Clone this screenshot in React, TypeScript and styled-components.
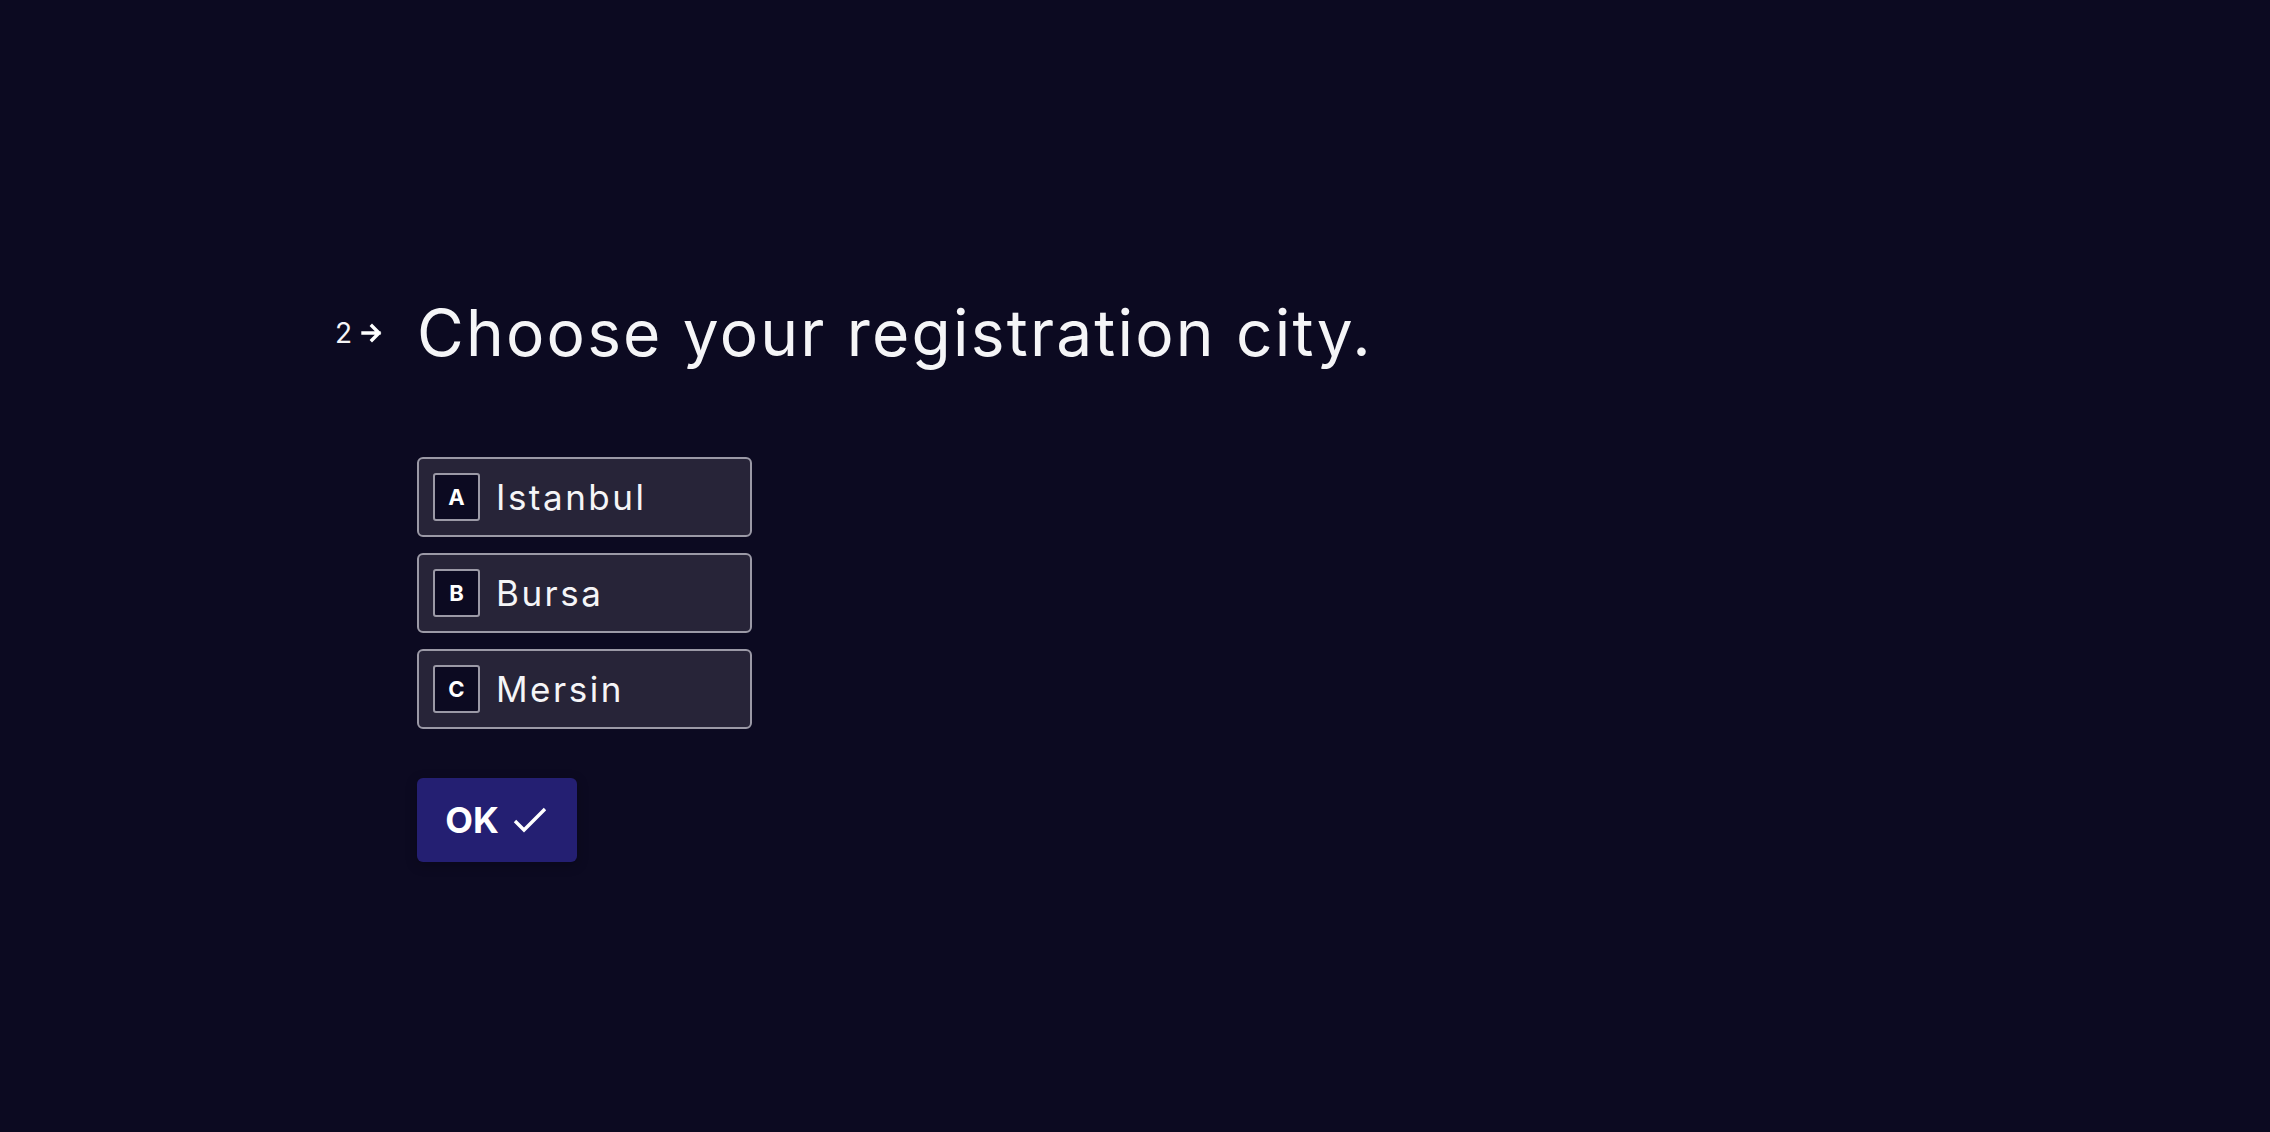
import React, { useState } from "react";
import styled, { createGlobalStyle } from "styled-components";

const GlobalStyle = createGlobalStyle`
  html, body {
    margin: 0;
    padding: 0;
    background: #0c0a21;
  }
  body {
    font-family: Inter, "Noto Sans", "Liberation Sans", sans-serif;
    color: #f5f5f7;
  }
`;

const Page = styled.div`
  min-height: 100vh;
  background: #0c0a21;
`;

const Question = styled.div`
  display: grid;
  grid-template-columns: 82px auto;
  padding: 295px 0 0 335px;
`;

const Counter = styled.div`
  height: 76px;
  display: flex;
  align-items: center;
  gap: 8px;
  font-size: 28px;
  letter-spacing: 1px;
  color: #f5f5f7;
`;

const Content = styled.div`
  display: flex;
  flex-direction: column;
`;

const Heading = styled.h1`
  margin: 0;
  font-size: 64px;
  line-height: 76px;
  font-weight: 400;
  letter-spacing: 2.2px;
  color: #f5f5f7;
`;

const Options = styled.div`
  display: flex;
  flex-direction: column;
  gap: 16px;
  margin-top: 86px;
`;

const Option = styled.button<{ selected?: boolean }>`
  width: 335px;
  height: 80px;
  box-sizing: border-box;
  display: flex;
  align-items: center;
  gap: 16px;
  padding: 0 14px;
  border-radius: 6px;
  border: 2px solid ${(props) => (props.selected ? "#d8d7e0" : "#9b99a6")};
  background: ${(props) => (props.selected ? "#3a3650" : "#272438")};
  color: #f5f5f7;
  font-family: inherit;
  font-size: 35px;
  letter-spacing: 2.5px;
  text-align: left;
  cursor: pointer;
`;

const Key = styled.span`
  width: 47px;
  height: 48px;
  box-sizing: border-box;
  display: flex;
  align-items: center;
  justify-content: center;
  border: 2px solid #9b99a6;
  border-radius: 3px;
  background: #0c0a21;
  font-size: 22px;
  font-weight: 700;
  letter-spacing: 0;
  color: #ffffff;
`;

const OkButton = styled.button`
  margin-top: 49px;
  align-self: flex-start;
  width: 160px;
  height: 84px;
  display: flex;
  align-items: center;
  justify-content: center;
  gap: 14px;
  padding: 0 2px 0 0;
  border: none;
  border-radius: 6px;
  background: #241f72;
  box-shadow: 0 3px 12px rgba(0, 0, 0, 0.25);
  color: #ffffff;
  font-family: inherit;
  font-size: 36px;
  font-weight: 700;
  cursor: pointer;
`;

const cities = [
  { key: "A", label: "Istanbul" },
  { key: "B", label: "Bursa" },
  { key: "C", label: "Mersin" },
];

const App: React.FC = () => {
  const [selected, setSelected] = useState<string | null>(null);

  return (
    <Page>
      <GlobalStyle />
      <Question>
        <Counter>
          <span>2</span>
          <svg width="22" height="20" viewBox="0 0 22 20" fill="none">
            <path d="M2 10h16M11 3l7 7-7 7" stroke="#fff" strokeWidth="3.4" strokeLinecap="square" />
          </svg>
        </Counter>
        <Content>
          <Heading>Choose your registration city.</Heading>
          <Options>
            {cities.map((city) => (
              <Option
                key={city.key}
                selected={selected === city.key}
                onClick={() => setSelected(city.key)}
              >
                <Key>{city.key}</Key>
                {city.label}
              </Option>
            ))}
          </Options>
          <OkButton>
            OK
            <svg width="34" height="28" viewBox="0 0 34 28" fill="none">
              <path d="M2 15l9 9L32 3" stroke="#fff" strokeWidth="3.4" />
            </svg>
          </OkButton>
        </Content>
      </Question>
    </Page>
  );
};

export default App;
